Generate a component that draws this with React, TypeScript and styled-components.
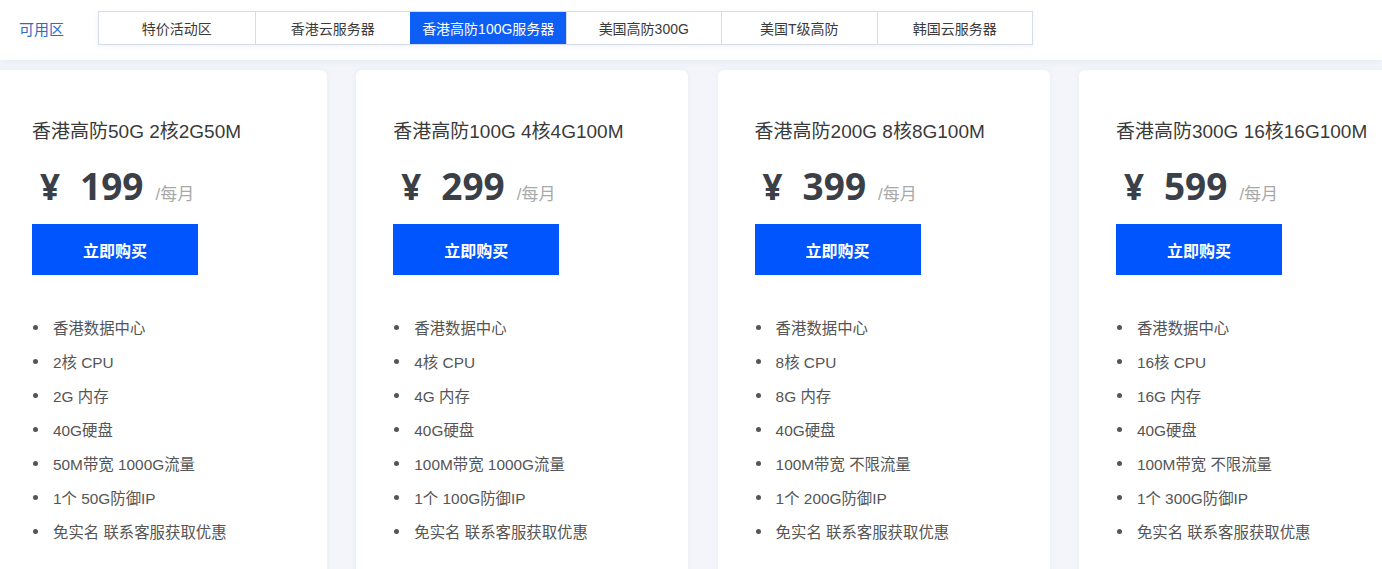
import React from "react";
import styled, { createGlobalStyle } from "styled-components";

const Global = createGlobalStyle`
  html, body { margin: 0; padding: 0; background: #f3f5fa; overflow: hidden; }
  body { font-family: "Liberation Sans", "Noto Sans CJK SC", sans-serif; }
  * { box-sizing: border-box; }
`;

const Page = styled.div`
  width: 1382px;
  height: 569px;
  overflow: hidden;
  background: #f3f5fa;
`;

const TopBar = styled.div`
  height: 60px;
  background: #ffffff;
  display: flex;
  align-items: flex-start;
  padding: 11px 0 0 19px;
  box-shadow: 0 2px 6px rgba(200, 208, 225, 0.25);
`;

const ZoneLabel = styled.div`
  width: 79px;
  height: 33px;
  line-height: 38px;
  font-size: 15px;
  color: #2f6cc6;
`;

const Tabs = styled.div`
  display: flex;
  border: 1px solid #d6dcea;
  height: 34px;
  box-shadow: 0 1px 4px rgba(200, 210, 230, 0.3);
`;

const Tab = styled.div<{ $active?: boolean }>`
  width: 155.5px;
  height: 32px;
  display: flex;
  align-items: center;
  justify-content: center;
  font-size: 14px;
  color: ${(p) => (p.$active ? "#ffffff" : "#3a3a3a")};
  background: ${(p) => (p.$active ? "#0d5ef5" : "#ffffff")};
  border-left: 1px solid ${(p) => (p.$active ? "#0d5ef5" : "#d6dcea")};
  &:first-child { border-left: none; }
`;

const Cards = styled.div`
  display: flex;
  gap: 29.3px;
  margin: 10px 0 0 -5px;
`;

const Card = styled.div`
  flex: 0 0 332px;
  height: 520px;
  background: #ffffff;
  border-radius: 6px;
  padding: 50px 37px 0;
  box-shadow: 0 0 4px rgba(210, 216, 230, 0.35);
`;

const Title = styled.div`
  font-size: 19px;
  line-height: 24px;
  color: #3a3a3a;
  white-space: nowrap;
`;

const PriceRow = styled.div`
  display: flex;
  align-items: baseline;
  margin-top: 16px;
  height: 44px;
  padding-left: 8px;
`;

const Yen = styled.span`
  font-family: "Open Sans", "Noto Sans CJK SC", sans-serif;
  font-weight: 700;
  font-size: 35px;
  color: #3b3f47;
  margin-right: 20px;
`;

const Amount = styled.span`
  font-family: "Open Sans", sans-serif;
  font-weight: 700;
  font-size: 37px;
  color: #3b3f47;
  margin-right: 12px;
`;

const Period = styled.span`
  font-size: 17px;
  color: #a9a9a9;
`;

const BuyButton = styled.button`
  display: block;
  margin-top: 20px;
  width: 166px;
  height: 51px;
  border: none;
  background: #0055fe;
  color: #ffffff;
  font-family: "Noto Sans CJK SC", sans-serif;
  font-weight: 700;
  font-size: 16px;
  cursor: pointer;
`;

const Features = styled.ul`
  list-style: none;
  margin: 35px 0 0;
  padding: 0;
`;

const Feature = styled.li`
  display: flex;
  align-items: center;
  height: 34px;
  font-size: 15.4px;
  color: #555555;
  &::before {
    content: "";
    width: 5px;
    height: 5px;
    border-radius: 50%;
    background: #555555;
    margin: 0 15px 0 1px;
  }
`;

const tabs = ["特价活动区", "香港云服务器", "香港高防100G服务器", "美国高防300G", "美国T级高防", "韩国云服务器"];

const plans = [
  { title: "香港高防50G 2核2G50M", price: "199", items: ["香港数据中心", "2核 CPU", "2G 内存", "40G硬盘", "50M带宽 1000G流量", "1个 50G防御IP", "免实名 联系客服获取优惠"] },
  { title: "香港高防100G 4核4G100M", price: "299", items: ["香港数据中心", "4核 CPU", "4G 内存", "40G硬盘", "100M带宽 1000G流量", "1个 100G防御IP", "免实名 联系客服获取优惠"] },
  { title: "香港高防200G 8核8G100M", price: "399", items: ["香港数据中心", "8核 CPU", "8G 内存", "40G硬盘", "100M带宽 不限流量", "1个 200G防御IP", "免实名 联系客服获取优惠"] },
  { title: "香港高防300G 16核16G100M", price: "599", items: ["香港数据中心", "16核 CPU", "16G 内存", "40G硬盘", "100M带宽 不限流量", "1个 300G防御IP", "免实名 联系客服获取优惠"] },
];

export default function App() {
  return (
    <Page>
      <Global />
      <TopBar>
        <ZoneLabel>可用区</ZoneLabel>
        <Tabs>
          {tabs.map((t, i) => (
            <Tab key={t} $active={i === 2}>{t}</Tab>
          ))}
        </Tabs>
      </TopBar>
      <Cards>
        {plans.map((p) => (
          <Card key={p.title}>
            <Title>{p.title}</Title>
            <PriceRow>
              <Yen>¥</Yen>
              <Amount>{p.price}</Amount>
              <Period>/每月</Period>
            </PriceRow>
            <BuyButton>立即购买</BuyButton>
            <Features>
              {p.items.map((it) => (
                <Feature key={it}>{it}</Feature>
              ))}
            </Features>
          </Card>
        ))}
      </Cards>
    </Page>
  );
}
